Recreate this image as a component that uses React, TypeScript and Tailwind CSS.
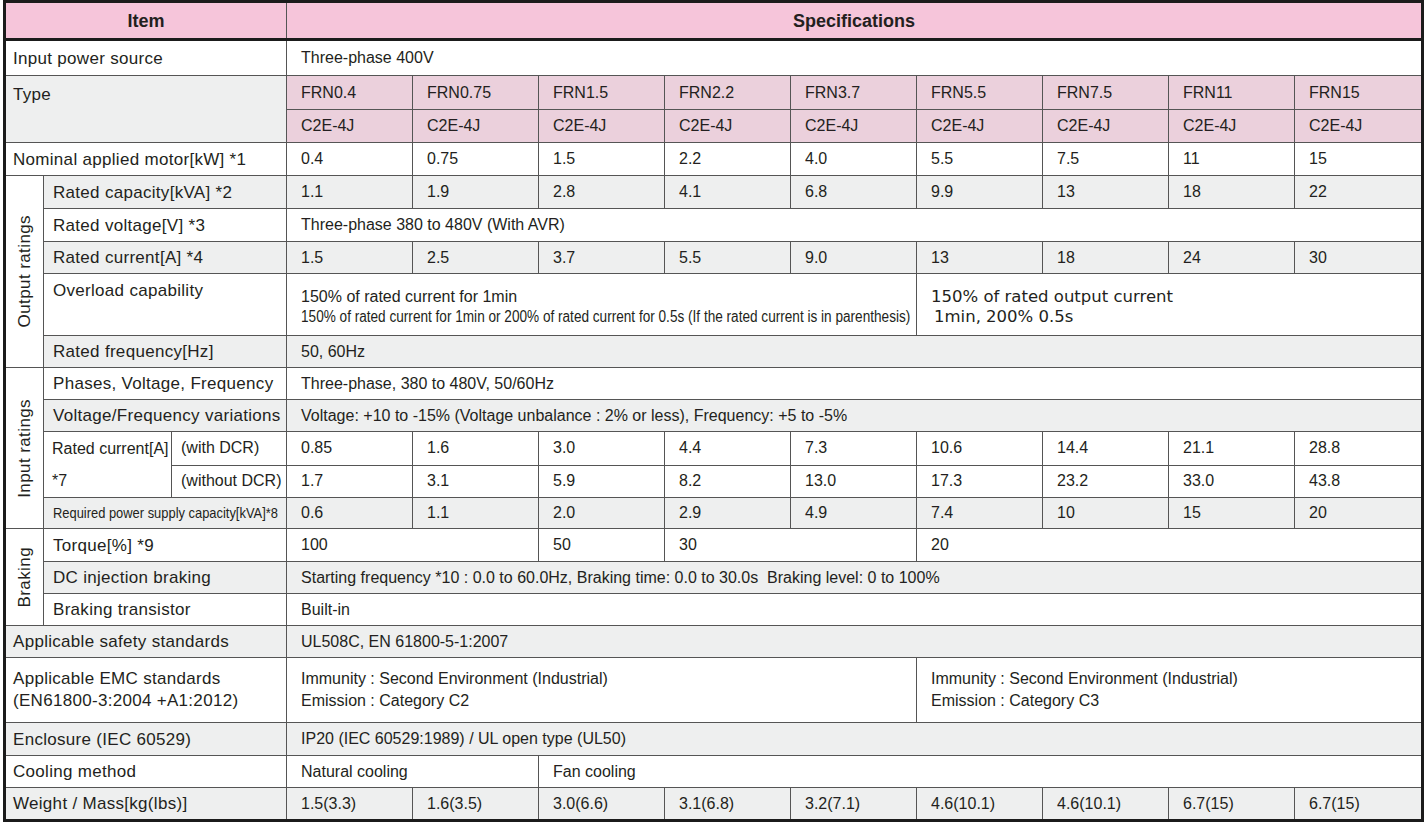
import React from "react";

const frn = ["FRN0.4", "FRN0.75", "FRN1.5", "FRN2.2", "FRN3.7", "FRN5.5", "FRN7.5", "FRN11", "FRN15"];
const nominal = ["0.4", "0.75", "1.5", "2.2", "4.0", "5.5", "7.5", "11", "15"];
const capacity = ["1.1", "1.9", "2.8", "4.1", "6.8", "9.9", "13", "18", "22"];
const current = ["1.5", "2.5", "3.7", "5.5", "9.0", "13", "18", "24", "30"];
const withDCR = ["0.85", "1.6", "3.0", "4.4", "7.3", "10.6", "14.4", "21.1", "28.8"];
const withoutDCR = ["1.7", "3.1", "5.9", "8.2", "13.0", "17.3", "23.2", "33.0", "43.8"];
const required = ["0.6", "1.1", "2.0", "2.9", "4.9", "7.4", "10", "15", "20"];
const weight = ["1.5(3.3)", "1.6(3.5)", "3.0(6.6)", "3.1(6.8)", "3.2(7.1)", "4.6(10.1)", "4.6(10.1)", "6.7(15)", "6.7(15)"];

const B = "border border-[#555]";
const LBL1 = `${B} pl-[7px] pr-0 py-0 align-middle whitespace-nowrap text-[17px] tracking-[0.3px]`;
const LBL = `${B} pl-[9px] pr-0 py-0 align-middle whitespace-nowrap text-[17px] tracking-[0.3px]`;
const SUB = `${B} pl-[9px] pr-0 py-0 align-middle whitespace-nowrap text-[16px]`;
const D = `${B} pl-[14px] pr-0 py-0 align-middle whitespace-nowrap text-[16px]`;
const GRP = `${B} p-0 align-middle text-center bg-white`;

const gray = "bg-[#eeefef]";
const pink = "bg-[#ebd0dc]";

function Vert({ children }: { children: React.ReactNode }) {
  return (
    <div className="flex items-center justify-center">
      <span className="[writing-mode:vertical-rl] rotate-180 whitespace-nowrap text-[17px] tracking-[0.4px]">{children}</span>
    </div>
  );
}

function Cells({ values, bg = "" }: { values: string[]; bg?: string }) {
  return (
    <>
      {values.map((v, i) => (
        <td key={i} className={`${D} ${bg}`}>
          {v}
        </td>
      ))}
    </>
  );
}

export default function App() {
  return (
    <div className="w-[1426px] h-[822px] bg-white pl-[3px] pt-0 font-['Liberation_Sans',Arial,sans-serif] text-[#231f20]">
      <table className="table-fixed border-collapse w-[1418px] border-[3px] border-[#1b1b1b] leading-none">
        <colgroup>
          <col className="w-[39px]" />
          <col className="w-[128px]" />
          <col className="w-[115px]" />
          <col className="w-[126px]" />
          <col className="w-[126px]" />
          <col className="w-[126px]" />
          <col className="w-[126px]" />
          <col className="w-[126px]" />
          <col className="w-[126px]" />
          <col className="w-[126px]" />
          <col className="w-[126px]" />
          <col className="w-[128px]" />
        </colgroup>
        <tbody>
          <tr className="h-[38px] bg-[#f6c5da]">
            <td colSpan={3} className="border border-[#555] border-b-[3px] border-b-[#1b1b1b] text-center font-bold text-[18px] p-0">
              Item
            </td>
            <td colSpan={9} className="border border-[#555] border-b-[3px] border-b-[#1b1b1b] text-center font-bold text-[18px] p-0">
              Specifications
            </td>
          </tr>
          <tr className="h-[36px]">
            <td colSpan={3} className={LBL1}>Input power source</td>
            <td colSpan={9} className={D}>Three-phase 400V</td>
          </tr>
          <tr className="h-[34px]">
            <td colSpan={3} rowSpan={2} className={`${LBL1} ${gray} align-top pt-[10px]`}>Type</td>
            <Cells values={frn} bg={pink} />
          </tr>
          <tr className="h-[33px]">
            <Cells values={frn.map(() => "C2E-4J")} bg={pink} />
          </tr>
          <tr className="h-[33px]">
            <td colSpan={3} className={LBL1}>Nominal applied motor[kW] *1</td>
            <Cells values={nominal} />
          </tr>
          {/* Output ratings */}
          <tr className="h-[33px]">
            <td rowSpan={5} className={GRP}>
              <Vert>Output ratings</Vert>
            </td>
            <td colSpan={2} className={`${LBL} ${gray}`}>Rated capacity[kVA] *2</td>
            <Cells values={capacity} bg={gray} />
          </tr>
          <tr className="h-[33px]">
            <td colSpan={2} className={LBL}>Rated voltage[V] *3</td>
            <td colSpan={9} className={D}>Three-phase 380 to 480V (With AVR)</td>
          </tr>
          <tr className="h-[32px]">
            <td colSpan={2} className={`${LBL} ${gray}`}>Rated current[A] *4</td>
            <Cells values={current} bg={gray} />
          </tr>
          <tr className="h-[62px]">
            <td colSpan={2} className={`${LBL} align-top pt-[8px]`}>Overload capability</td>
            <td colSpan={5} className={`${D} pt-[4px]`}>
              <div className="text-[16px] leading-[20px]">150% of rated current for 1min</div>
              <div className="h-[20px] whitespace-nowrap">
                <span className="inline-block origin-left scale-x-[0.85] text-[16px] leading-[20px]">
                  150% of rated current for 1min or 200% of rated current for 0.5s (If the rated current is in parenthesis)
                </span>
              </div>
            </td>
            <td colSpan={4} className={`${D} pt-[4px] font-['DejaVu_Sans',sans-serif]`}>
              <div className="text-[16.5px] leading-[20px]">150% of rated output current</div>
              <div className="text-[16.5px] leading-[20px] pl-[3px]">1min, 200% 0.5s</div>
            </td>
          </tr>
          <tr className="h-[32px]">
            <td colSpan={2} className={`${LBL} ${gray}`}>Rated frequency[Hz]</td>
            <td colSpan={9} className={`${D} ${gray}`}>50, 60Hz</td>
          </tr>
          {/* Input ratings */}
          <tr className="h-[32px]">
            <td rowSpan={5} className={GRP}>
              <Vert>Input ratings</Vert>
            </td>
            <td colSpan={2} className={LBL}>Phases, Voltage, Frequency</td>
            <td colSpan={9} className={D}>Three-phase, 380 to 480V, 50/60Hz</td>
          </tr>
          <tr className="h-[32px]">
            <td colSpan={2} className={`${LBL} ${gray}`}>Voltage/Frequency variations</td>
            <td colSpan={9} className={`${D} ${gray}`}>
              Voltage: +10 to -15% (Voltage unbalance : 2% or less), Frequency: +5 to -5%
            </td>
          </tr>
          <tr className="h-[33px]">
            <td rowSpan={2} className={`${B} p-0 align-middle whitespace-nowrap text-[16px]`}>
              <div className="flex flex-col">
                <div className="h-[33px] flex items-center pl-[8px]">Rated current[A]</div>
                <div className="h-[32px] flex items-center pl-[8px]">*7</div>
              </div>
            </td>
            <td className={SUB}>(with DCR)</td>
            <Cells values={withDCR} />
          </tr>
          <tr className="h-[32px]">
            <td className={SUB}>(without DCR)</td>
            <Cells values={withoutDCR} />
          </tr>
          <tr className="h-[31px]">
            <td colSpan={2} className={`${SUB} ${gray} pl-[7px]`}>
              <span className="inline-block origin-left scale-x-[0.86] text-[15px]">Required power supply capacity[kVA]*8</span>
            </td>
            <Cells values={required} bg={gray} />
          </tr>
          {/* Braking */}
          <tr className="h-[33px]">
            <td rowSpan={3} className={GRP}>
              <Vert>Braking</Vert>
            </td>
            <td colSpan={2} className={LBL}>Torque[%] *9</td>
            <td colSpan={2} className={D}>100</td>
            <td className={D}>50</td>
            <td colSpan={2} className={D}>30</td>
            <td colSpan={4} className={D}>20</td>
          </tr>
          <tr className="h-[32px]">
            <td colSpan={2} className={`${LBL} ${gray}`}>DC injection braking</td>
            <td colSpan={9} className={`${D} ${gray}`}>
              Starting frequency *10 : 0.0 to 60.0Hz, Braking time: 0.0 to 30.0s&nbsp; Braking level: 0 to 100%
            </td>
          </tr>
          <tr className="h-[32px]">
            <td colSpan={2} className={LBL}>Braking transistor</td>
            <td colSpan={9} className={D}>Built-in</td>
          </tr>
          <tr className="h-[32px]">
            <td colSpan={3} className={`${LBL1} ${gray}`}>Applicable safety standards</td>
            <td colSpan={9} className={`${D} ${gray}`}>UL508C, EN 61800-5-1:2007</td>
          </tr>
          <tr className="h-[65px]">
            <td colSpan={3} className={`${LBL1} leading-[22px]`}>
              <div>Applicable EMC standards</div>
              <div>(EN61800-3:2004 +A1:2012)</div>
            </td>
            <td colSpan={5} className={`${D} leading-[22px]`}>
              <div>Immunity : Second Environment (Industrial)</div>
              <div>Emission : Category C2</div>
            </td>
            <td colSpan={4} className={`${D} leading-[22px]`}>
              <div>Immunity : Second Environment (Industrial)</div>
              <div>Emission : Category C3</div>
            </td>
          </tr>
          <tr className="h-[33px]">
            <td colSpan={3} className={`${LBL1} ${gray}`}>Enclosure (IEC 60529)</td>
            <td colSpan={9} className={`${D} ${gray}`}>IP20 (IEC 60529:1989) / UL open type (UL50)</td>
          </tr>
          <tr className="h-[32px]">
            <td colSpan={3} className={LBL1}>Cooling method</td>
            <td colSpan={2} className={D}>Natural cooling</td>
            <td colSpan={7} className={D}>Fan cooling</td>
          </tr>
          <tr className="h-[33px]">
            <td colSpan={3} className={`${LBL1} ${gray}`}>Weight / Mass[kg(lbs)]</td>
            <Cells values={weight} bg={gray} />
          </tr>
        </tbody>
      </table>
    </div>
  );
}
